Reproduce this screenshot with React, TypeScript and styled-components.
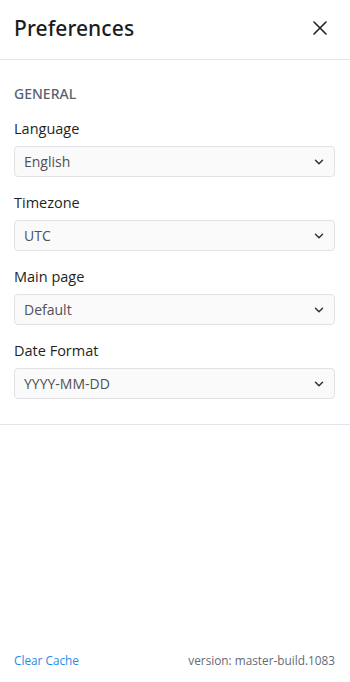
import React from "react";
import styled, { createGlobalStyle } from "styled-components";

const Global = createGlobalStyle`
  html, body { margin: 0; padding: 0; background: #fff; }
  body { font-family: "Open Sans", "Noto Sans", sans-serif; -webkit-font-smoothing: antialiased; }
  * { box-sizing: border-box; }
`;

const Panel = styled.div`
  width: 350px;
  height: 682px;
  display: flex;
  flex-direction: column;
  background: #fff;
`;

const Header = styled.header`
  height: 60px;
  padding: 0 23px 3px 14px;
  display: flex;
  align-items: center;
  justify-content: space-between;
  border-bottom: 1px solid #e6e6e9;
`;

const Title = styled.h1`
  margin: 0;
  font-family: "Noto Sans", sans-serif;
  font-weight: 500;
  font-size: 21px;
  color: #1d1d1f;
  letter-spacing: 0.1px;
`;

const CloseButton = styled.button`
  border: 0;
  background: none;
  padding: 0;
  width: 14px;
  height: 14px;
  display: flex;
  align-items: center;
  justify-content: center;
  cursor: pointer;
`;

const Section = styled.section`
  padding: 25px 15px 25px 14px;
  border-bottom: 1px solid #e6e6e9;
  display: flex;
  flex-direction: column;
`;

const SectionTitle = styled.h2`
  margin: 0 0 16px;
  font-family: "Noto Sans", sans-serif;
  font-size: 14px;
  font-weight: 500;
  color: #5a6270;
  text-transform: uppercase;
  line-height: 18px;
`;

const Field = styled.div`
  display: flex;
  flex-direction: column;
  gap: 7px;
  & + & { margin-top: 16px; }
`;

const Label = styled.label`
  font-size: 14.5px;
  color: #1f1f22;
  line-height: 20px;
`;

const Select = styled.div`
  height: 31px;
  border: 1px solid #e2e2e6;
  border-radius: 4px;
  background: #fafafa;
  display: flex;
  align-items: center;
  justify-content: space-between;
  padding: 0 10px 0 9px;
  font-size: 14px;
  color: #505055;
`;

const Spacer = styled.div`
  flex: 1;
`;

const Footer = styled.footer`
  display: flex;
  justify-content: space-between;
  align-items: center;
  padding: 0 15px 14px 14px;
  font-size: 11.8px;
  line-height: 16px;
`;

const Link = styled.a`
  color: #1e8ee6;
  text-decoration: none;
  cursor: pointer;
`;

const Version = styled.span`
  color: #666a72;
`;

const Chevron = () => (
  <svg width="10" height="6" viewBox="0 0 10 6" fill="none">
    <path d="M1.5 1.2l3.5 3.5 3.5-3.5" stroke="#333" strokeWidth="1.5" strokeLinecap="round" strokeLinejoin="round" />
  </svg>
);

const fields = [
  { label: "Language", value: "English" },
  { label: "Timezone", value: "UTC" },
  { label: "Main page", value: "Default" },
  { label: "Date Format", value: "YYYY-MM-DD" },
];

export default function App() {
  return (
    <>
      <Global />
      <Panel>
        <Header>
          <Title>Preferences</Title>
          <CloseButton aria-label="Close">
            <svg width="14" height="14" viewBox="0 0 14 14" fill="none">
              <path d="M1 1l12 12M13 1L1 13" stroke="#222" strokeWidth="1.6" strokeLinecap="round" />
            </svg>
          </CloseButton>
        </Header>
        <Section>
          <SectionTitle>General</SectionTitle>
          {fields.map((f) => (
            <Field key={f.label}>
              <Label>{f.label}</Label>
              <Select>
                <span>{f.value}</span>
                <Chevron />
              </Select>
            </Field>
          ))}
        </Section>
        <Spacer />
        <Footer>
          <Link>Clear Cache</Link>
          <Version>version: master-build.1083</Version>
        </Footer>
      </Panel>
    </>
  );
}
